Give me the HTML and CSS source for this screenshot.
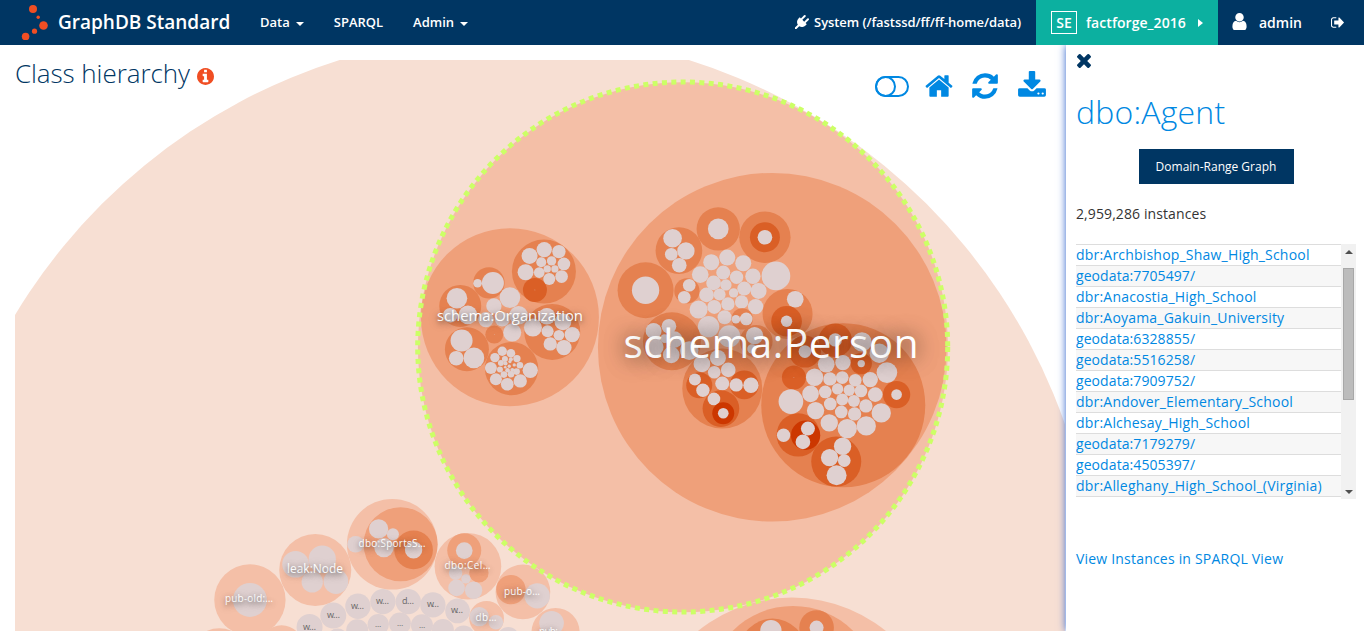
FILE: index.html
```html
<!DOCTYPE html>
<html lang="en">
<head>
<meta charset="utf-8">
<title>GraphDB Standard - Class hierarchy</title>
<link rel="stylesheet" href="styles.css">
</head>
<body>
<header class="navbar">
  <svg class="logo" viewBox="0 0 28 40"><circle cx="13" cy="9" r="4"/><circle cx="18.2" cy="17.2" r="1.7"/><circle cx="23.5" cy="25.5" r="4.3"/><circle cx="14.5" cy="31.2" r="2.6"/><circle cx="5.6" cy="36.5" r="3.8"/></svg>
  <span class="brand">GraphDB Standard</span>
  <nav class="menu">
    <a>Data<i class="caret"></i></a>
    <a>SPARQL</a>
    <a>Admin<i class="caret"></i></a>
  </nav>
  <div class="location">
    <svg class="plug" viewBox="0 0 1792 1792"><path d="M1755 453q37 38 37 90.5t-37 90.5l-401 400 150 150-160 160q-163 163-389.5 186.5t-411.5-100.5l-362 362h-181v-181l362-362q-124-185-100.5-411.5t186.5-389.5l160-160 150 150 400-401q38-37 91-37t90 37 37 90.5-37 90.5l-400 401 234 234 401-400q38-37 91-37t90 37z"/></svg>
    <span>System (/fastssd/ff/ff-home/data)</span>
  </div>
  <div class="repo"><span class="repo-badge">SE</span><span class="repo-name">factforge_2016</span><i class="caret-right"></i></div>
  <div class="user">
    <svg class="user-icon" viewBox="256 128 1280 1536"><path d="M1536 1399q0 109-62.5 187t-150.5 78h-854q-88 0-150.5-78t-62.5-187q0-85 8.5-160.5t31.5-152 58.5-131 94-89 134.5-34.5q131 128 313 128t313-128q76 0 134.5 34.5t94 89 58.5 131 31.5 152 8.5 160.5zm-256-887q0 159-112.5 271.5t-271.5 112.5-271.5-112.5-112.5-271.5 112.5-271.5 271.5-112.5 271.5 112.5 112.5 271.5z"/></svg>
    <span class="user-name">admin</span>
    <svg class="signout" viewBox="64 256 1568 1280"><path d="M704 1440q0 4 1 20t.5 26.5-3 23.5-10 19.5-20.5 6.5h-320q-119 0-203.5-84.5t-84.5-203.5v-704q0-119 84.5-203.5t203.5-84.5h320q13 0 22.5 9.5t9.5 22.5q0 4 1 20t.5 26.5-3 23.5-10 19.5-20.5 6.5h-320q-66 0-113 47t-47 113v704q0 66 47 113t113 47h312l11.500 1 11.500 3 8 5.500 7 9 2 13.500zm928-544q0 26-19 45l-544 544q-19 19-45 19t-45-19-19-45v-288h-448q-26 0-45-19t-19-45v-384q0-26 19-45t45-19h448v-288q0-26 19-45t45-19 45 19l544 544q19 19 19 45z"/></svg>
  </div>
</header>
<div class="page">
  <main class="main">
    <svg class="chart" id="chart" viewBox="15 60 1050 571"></svg>
    <h1 class="title">Class hierarchy
      <svg class="info" viewBox="128 128 1536 1536"><path d="M1152 1376v-160q0-14-9-23t-23-9h-96v-512q0-14-9-23t-23-9h-320q-14 0-23 9t-9 23v160q0 14 9 23t23 9h96v320h-96q-14 0-23 9t-9 23v160q0 14 9 23t23 9h448q14 0 23-9t9-23zm-128-896v-160q0-14-9-23t-23-9h-192q-14 0-23 9t-9 23v160q0 14 9 23t23 9h192q14 0 23-9t9-23zm640 416q0 209-103 385.500t-279.500 279.500-385.500 103-385.500-103-279.500-279.500-103-385.500 103-385.500 279.500-279.500 385.500-103 385.500 103 279.500 279.500 103 385.500z"/></svg>
    </h1>
    <div class="toolbar">
      <svg class="toggle" viewBox="0 0 34 21"><rect x="1" y="1" width="32" height="19" rx="9.500"/><circle cx="10.500" cy="10.500" r="9.500"/></svg>
      <svg class="tool" viewBox="0 0 1792 1792"><path d="M1472 992v480q0 26-19 45t-45 19h-384v-384h-256v384h-384q-26 0-45-19t-19-45v-480q0-1 .5-3t.5-3l575-474 575 474q1 2 1 6zm223-69l-62 74q-8 9-21 11h-3q-13 0-21-7l-692-577-692 577q-12 8-24 7-13-2-21-11l-62-74q-8-10-7-23.500t11-21.500l719-599q32-26 76-26t76 26l244 204v-195q0-14 9-23t23-9h192q14 0 23 9t9 23v408l219 182q10 8 11 21.500t-7 23.500z"/></svg>
      <svg class="tool" viewBox="0 0 1792 1792"><path d="M1639 1056q0 5-1 7-64 268-268 434.500t-478 166.500q-146 0-282.500-55t-243.500-157l-129 129q-19 19-45 19t-45-19-19-45v-448q0-26 19-45t45-19h448q26 0 45 19t19 45-19 45l-137 137q71 66 161 102t187 36q134 0 250-65t186-179q11-17 53-117 8-23 30-23h192q13 0 22.500 9.500t9.500 22.500zm25-800v448q0 26-19 45t-45 19h-448q-26 0-45-19t-19-45 19-45l138-138q-148-137-349-137-134 0-250 65t-186 179q-11 17-53 117-8 23-30 23h-199q-13 0-22.500-9.500t-9.500-22.500v-7q65-268 270-434.500t480-166.500q146 0 284 55.500t245 156.500l130-129q19-19 45-19t45 19 19 45z"/></svg>
      <svg class="tool" viewBox="0 0 1792 1792"><path d="M1344 1344q0-26-19-45t-45-19-45 19-19 45 19 45 45 19 45-19 19-45zm256 0q0-26-19-45t-45-19-45 19-19 45 19 45 45 19 45-19 19-45zm128-224v320q0 40-28 68t-68 28h-1472q-40 0-68-28t-28-68v-320q0-40 28-68t68-28h465l135 136q58 56 136 56t136-56l136-136h464q40 0 68 28t28 68zm-325-569q17 41-14 70l-448 448q-18 19-45 19t-45-19l-448-448q-31-29-14-70 17-39 59-39h256v-448q0-26 19-45t45-19h256q26 0 45 19t19 45v448h256q42 0 59 39z"/></svg>
    </div>
  </main>
  <aside class="panel">
    <svg class="close" viewBox="302 238 1188 1188"><path transform="translate(0 -128)" d="M1490 1322q0 40-28 68l-136 136q-28 28-68 28t-68-28l-294-294-294 294q-28 28-68 28t-68-28l-136-136q-28-28-28-68t28-68l294-294-294-294q-28-28-28-68t28-68l136-136q28-28 68-28t68 28l294 294 294-294q28-28 68-28t68 28l136 136q28 28 28 68t-28 68l-294 294 294 294q28 28 28 68z"/></svg>
    <h2 class="class-name">dbo:Agent</h2>
    <button class="graph-button">Domain-Range Graph</button>
    <p class="count">2,959,286 instances</p>
    <div class="list">
      <ul class="instances">
        <li>dbr:Archbishop_Shaw_High_School</li>
        <li class="numeric">geodata:7705497/</li>
        <li>dbr:Anacostia_High_School</li>
        <li>dbr:Aoyama_Gakuin_University</li>
        <li class="numeric">geodata:6328855/</li>
        <li class="numeric">geodata:5516258/</li>
        <li class="numeric">geodata:7909752/</li>
        <li>dbr:Andover_Elementary_School</li>
        <li>dbr:Alchesay_High_School</li>
        <li class="numeric">geodata:7179279/</li>
        <li class="numeric">geodata:4505397/</li>
        <li>dbr:Alleghany_High_School_(Virginia)</li>
      </ul>
      <div class="scrollbar"><i class="arrow-up"></i><i class="thumb"></i><i class="arrow-down"></i></div>
    </div>
    <a class="view-link">View Instances in SPARQL View</a>
  </aside>
</div>
<script src="chart.js"></script>
</body>
</html>
```
FILE: styles.css
```css
* { box-sizing: border-box; }
body { margin: 0; height: 631px; overflow: hidden; background: #fff; font-family: "Open Sans", sans-serif; font-size: 14px; color: #333; }

.navbar { display: flex; align-items: center; height: 45px; background: #003663; color: #fff; font-weight: 600; white-space: nowrap; }
.logo { width: 28px; height: 40px; margin-left: 20px; flex: none; fill: #f04e23; align-self: flex-start; }
.brand { margin-left: 10px; width: 172px; font-size: 19px; line-height: 44px; height: 45px; }
.menu { display: flex; gap: 30px; margin-left: 30px; padding-bottom: 2px; font-size: 13px; }
.caret { display: inline-block; margin-left: 6px; border: 4px solid transparent; border-top-color: #fff; border-bottom: 0; vertical-align: 1px; }
.location { display: flex; align-items: center; margin-left: auto; padding-bottom: 2px; gap: 5px; font-size: 13px; letter-spacing: -.07px; }
.plug { width: 14px; height: 14px; fill: #fff; }
.repo { display: flex; align-items: center; width: 182px; height: 45px; margin-left: 15px; padding-left: 15px; background: #0cb0a0; font-size: 14px; }
.repo-badge { width: 26px; height: 23px; border: 1px solid #fff; line-height: 22px; text-align: center; }
.repo-name { width: 100px; margin-left: 9px; letter-spacing: .05px; }
.caret-right { margin-left: 12px; border: 4px solid transparent; border-left: 5px solid #fff; border-right: 0; }
.user { display: flex; align-items: center; width: 146px; padding-left: 14px; }
.user-icon { width: 15px; height: 17px; fill: #fff; margin-bottom: 3px; }
.user-name { margin-left: 12px; width: 43px; }
.signout { width: 13px; height: 11px; fill: #fff; margin-left: 29px; }

.page { display: flex; height: 586px; }
.main { display: grid; grid-template: 15px 571px / 15px 1050px; flex: none; width: 1066px; }
.chart { grid-area: 2 / 2; width: 1050px; height: 571px; }
.title { grid-area: 1 / 2 / 3 / 3; justify-self: start; margin: 10px 0 0; font-size: 26px; font-weight: 300; line-height: 36px; letter-spacing: -.07px; color: #003663; height: 40px; }
.info { width: 17px; height: 17px; fill: #f04e23; vertical-align: -2px; }
.toolbar { grid-area: 2 / 2; justify-self: end; display: flex; align-items: flex-start; margin: 11px 18px 0 0; height: 30px; }
.toggle { width: 34px; height: 21px; margin: 5px 15px 0 0; fill: none; stroke: #0088e2; stroke-width: 2; }
.tool { width: 30px; height: 30px; margin-right: 16px; fill: #0088e2; }
.tool:nth-last-child(2) { margin-right: 17px; }
.tool:last-child { margin-right: 0; }

.level-0 { fill: #f7dfd3; }
.level-1 { fill: #f4bfa7; }
.level-2 { fill: #efa07a; }
.level-3 { fill: #e58150; }
.level-4 { fill: #da5f26; }
.level-5 { fill: #cc3700; }
.leaf { fill: #dfd0d0; }
.selected { fill: none; stroke: #ccff66; stroke-width: 5; stroke-dasharray: 5 4.37; }
.label { fill: #fff; text-anchor: middle; text-shadow: 0 2px 5px rgba(0,0,0,.5), 0 2px 12px rgba(0,0,0,.3); }
.label-big { text-shadow: 0 0 20px rgba(0,0,0,.6), 0 2px 24px rgba(0,0,0,.35); }
.label-leaf { fill: #666; text-anchor: middle; }

.panel { position: relative; display: flex; flex-direction: column; width: 298px; padding: 9px 8px 0 10px; background: #fff; box-shadow: 0 0 8px #3366cc; clip-path: inset(0 0 0 -14px); }
.close { width: 14px; height: 14px; fill: #003663; margin-left: 1px; }
.class-name { margin: 22px 0 0; font-size: 32px; font-weight: 300; line-height: 44px; color: #0088e2; letter-spacing: .2px; }
.graph-button { align-self: center; width: 155px; height: 35px; margin: 15px 0 0; padding: 0; border: 0; background: #003663; color: #fff; font: 400 12px "Open Sans", sans-serif; }
.count { margin: 20px 0 0; line-height: 20px; letter-spacing: .1px; }
.list { display: flex; height: 255px; margin-top: 20px; overflow: hidden; }
.instances { flex: 1; margin: 0; padding: 0; list-style: none; color: #0088e2; letter-spacing: .2px; }
.instances li { height: 21px; border-top: 1px solid #ddd; line-height: 20px; white-space: nowrap; }
.instances li:nth-child(even) { background: #f7f7f7; }
.instances li:last-child { height: 22px; border-bottom: 1px solid #ddd; }
.instances .numeric { letter-spacing: .08px; }
.scrollbar { display: flex; flex-direction: column; align-items: center; width: 15px; background: #f1f1f1; }
.arrow-up { margin-top: 6px; border: 4px solid transparent; border-bottom-color: #505050; border-top: 0; }
.thumb { width: 11px; height: 132px; margin-top: 14px; background: #bcbcbc; border: 1px solid #a8a8a8; }
.arrow-down { margin-top: 90px; border: 4px solid transparent; border-top-color: #505050; border-bottom: 0; }
.view-link { margin-top: 50px; line-height: 20px; color: #0088e2; letter-spacing: .2px; }
```
FILE: chart.js
```js
// Packed circles, grouped by cluster. Each cluster has an origin and is drawn
// at one third scale; entries are [level, x, y, r], level 9 marks a leaf.
const clusters = [
  { x: 0, y: 0, nodes: [[0,1542,1849,1750],[1,2048,1041,795],[2,2316,1041,523]] },
  { x: 660, y: 580, nodes: [[1,395,499,447],[2,398,333,256],[3,337,216,101],[9,332,151,32],[3,469,142,52],[9,469,142,21]] },
  { x: 410, y: 220, nodes: [
    [2,299,291,267],
    [3,401,154,96],[4,374,209,36],[9,374,209,1],[9,358,107,24],[9,402,88,23],[9,446,94,20],[9,461,131,19],[9,454,169,19],[9,417,176,18],[9,346,156,24],[9,393,126,15],[9,424,122,14],[9,411,146,11],[9,434,146,11],[9,387,157,16],
    [3,236,188,47],[9,248,188,33],[9,202,189,13],
    [3,252,343,27],[9,252,343,1],
    [3,150,257,63],[9,140,234,31],[9,173,284,28],[9,120,285,22],
    [3,170,387,66],[9,154,361,33],[9,191,413,31],[9,138,414,22],
    [3,426,335,84],[9,368,322,27],[9,410,288,25],[9,458,305,25],[9,486,343,23],[9,461,382,23],[9,420,371,20],[9,412,333,18],[9,446,345,16],
    [9,299,232,31],[9,251,257,23],[9,227,298,23],[9,276,297,22],[9,325,285,28],[9,306,337,27],
    [3,304,445,80],[9,360,450,23],[9,276,393,14],[9,302,399,13],[9,320,415,11],[9,329,435,10],[9,254,412,14],[9,242,443,18],[9,257,477,18],[9,291,492,19],[9,330,482,20],[9,284,416,9],[9,272,428,9],[9,269,448,9],[9,281,463,10],[9,302,462,10],[9,319,454,10],[9,302,417,6],[9,312,434,5],[9,286,430,6],[9,299,424,5],[9,292,450,7],[9,306,449,6],[9,297,438,5],[9,285,441,4]
  ] },
  { x: 610, y: 200, nodes: [
    [3,324,86,65],[9,324,86,31],[3,464,111,77],[4,464,111,45],[9,464,111,22],
    [3,206,151,70],[9,187,114,28],[9,227,152,26],[9,183,162,19],[9,207,195,22],
    [3,106,270,84],[9,106,270,41],[3,230,272,38],[9,237,255,19],[9,222,291,19],
    [9,303,186,24],[9,351,172,24],[9,399,189,24],[9,270,223,25],[9,339,217,21],[9,379,231,20],[9,428,228,23],[9,310,248,22],[9,347,254,17],[9,289,284,22],[9,328,283,18],[9,370,278,14],[9,402,265,21],[9,445,272,24],[9,497,227,43],[9,265,328,27],[9,312,320,21],[9,353,311,20],[9,394,305,20],[9,436,319,23],[9,343,351,21],
    [3,396,356,32],[9,377,357,13],[9,408,356,19],
    [3,532,341,75],[9,555,297,25],[4,529,363,46],[9,529,363,17]
  ] },
  { x: 610, y: 300, nodes: [
    [9,295,79,32],[9,357,108,33],
    [3,185,123,87],[9,130,92,24],[9,176,78,22],[9,163,115,13],[9,192,118,25],[9,133,140,27],[9,183,164,25],[9,237,151,28],
    [3,438,123,49],[9,433,106,26],[9,425,146,14],
    [3,336,265,120],[9,275,191,25],[9,323,173,24],[9,312,216,19],[9,354,209,22],
    [4,267,255,39],[9,254,238,18],[9,278,270,20],[4,402,254,43],[9,336,250,21],[9,378,254,20],[9,422,255,23],
    [4,332,325,55],[9,311,296,19],[5,339,339,33],[9,339,339,16]
  ] },
  { x: 750, y: 310, nodes: [
    [3,279,285,246],
    [4,255,90,50],[9,255,89,20],[4,164,124,48],[9,164,124,19],[4,333,160,32],[9,333,160,11],[4,131,202,36],[9,131,202,1],[4,439,253,41],[9,439,253,16],
    [4,144,374,65],[9,100,375,20],[5,166,375,44],[9,173,355,21],[9,158,395,22],
    [4,258,454,75],[9,277,408,26],[9,238,442,26],[9,282,451,19],[9,259,495,30],
    [9,335,95,29],[9,387,129,29],[9,410,187,31],[9,393,308,29],[9,348,347,29],[9,291,355,29],[9,237,338,26],[9,196,301,26],[9,122,274,37],[9,181,251,25],[9,193,201,26],[9,228,162,25],[9,278,157,23],[9,360,208,23],[9,375,253,22],[9,347,287,20],[9,313,311,20],[9,273,305,19],[9,240,281,19],[9,225,245,19],[9,239,206,20],[9,276,202,19],[9,315,210,19],[9,332,242,19],[9,297,240,17],[9,262,236,17],[9,276,268,18],[9,311,272,18]
  ] },
  { x: 200, y: 490, nodes: [
    [1,149,329,107],[9,149,329,51],[1,345,239,108],[9,286,222,40],[9,366,207,41],[9,336,275,32],[9,407,274,37],
    [1,57,508,94],[1,244,470,65],
    [9,328,410,39],[9,399,376,39],[9,473,348,38],[9,548,334,38],[9,534,403,32],[9,471,420,33],[9,412,448,33]
  ] },
  { x: 380, y: 490, nodes: [
    [1,36,162,136],[2,61,162,111],[3,100,179,58],[9,100,179,26],[9,-5,116,29],[9,38,132,18],[9,11,172,29],[9,-74,162,25],
    [9,84,334,38],[9,158,344,38],[9,232,362,37],[9,59,400,33],[9,125,405,33],[9,188,419,33],[9,250,439,33],[9,384,442,32],
    [1,263,228,100],[2,252,180,51],[9,252,181,25],[2,296,248,29],[9,226,249,20],[9,257,266,14],[9,229,293,25],[9,280,300,26],
    [1,428,305,82],[2,392,298,44],[9,471,317,38],
    [1,319,384,52],[9,297,379,29],[9,347,396,22],
    [1,526,425,72],[9,514,399,37]
  ] }
];

// [text, centre x, baseline y, drawn width, font size, class]
const labels = [
  ['schema:Person', 771, 358, 295, 40.5, 'label label-big'],
  ['schema:Organization', 510, 321, 146, 15, 'label'],
  ['leak:Node', 315, 573, 56, 12, 'label'],
  ['pub-old:…', 249, 602, 48, 10, 'label'],
  ['dbo:SportsS…', 392, 547, 67, 10, 'label'],
  ['dbo:Cel…', 467.5, 569, 46, 10, 'label'],
  ['pub-o…', 522, 595, 36, 10, 'label'],
  ['db…', 486, 621, 21, 10, 'label'],
  ['pub:…', 552, 635, 26, 10, 'label'],
  ['w…', 309.5, 630, 13, 9, 'label-leaf'],
  ['w…', 333.5, 618, 13, 9, 'label-leaf'],
  ['w…', 357.5, 609, 13, 9, 'label-leaf'],
  ['w…', 382.5, 604, 13, 9, 'label-leaf'],
  ['d…', 408, 604, 12, 9, 'label-leaf'],
  ['w…', 433, 607, 12, 9, 'label-leaf'],
  ['w…', 457, 613, 12, 9, 'label-leaf'],
  ['…', 378, 627, 6, 8, 'label-leaf'],
  ['…', 400, 626, 6, 8, 'label-leaf'],
  ['…', 422, 628, 6, 8, 'label-leaf']
];

const chart = document.getElementById('chart');
function add(tag, attributes) {
  const node = document.createElementNS('http://www.w3.org/2000/svg', tag);
  for (const name in attributes) node.setAttribute(name, attributes[name]);
  chart.appendChild(node);
  return node;
}
for (const { x, y, nodes } of clusters)
  for (const [level, cx, cy, r] of nodes)
    add('circle', { class: level === 9 ? 'leaf' : 'level-' + level, cx: x + cx / 3 + 0.25, cy: y + cy / 3 + 0.25, r: r / 3 });
add('circle', { class: 'selected', cx: 682.7, cy: 347, r: 265 });
for (const [text, x, y, width, size, name] of labels)
  add('text', { class: name, x, y, textLength: width, 'font-size': size }).textContent = text;
```
